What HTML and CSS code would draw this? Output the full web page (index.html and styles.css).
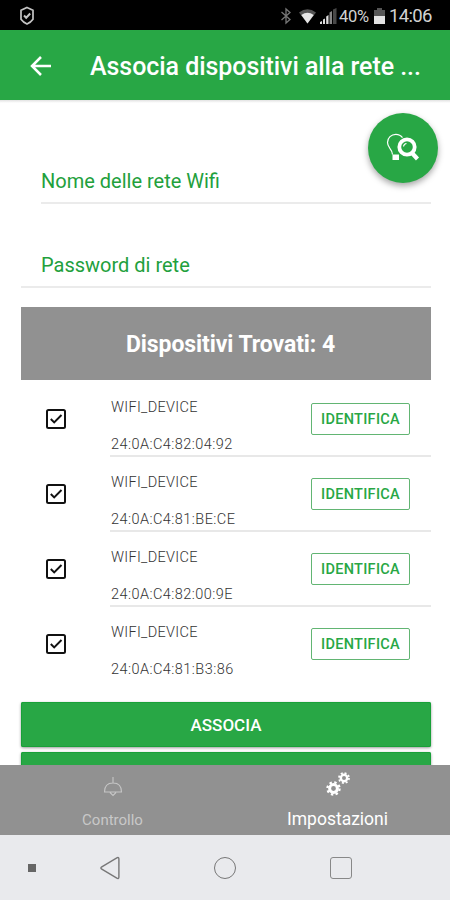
FILE: index.html
```html
<!DOCTYPE html>
<html lang="it">
<head>
<meta charset="utf-8">
<title>Associa dispositivi</title>
<link rel="stylesheet" href="styles.css">
</head>
<body>
<div class="phone">
  <div class="status">
    <svg class="shield" width="16" height="20" viewBox="0 0 16 20" fill="none" stroke="#c4c4c4" stroke-width="1.7"><path d="M8 1.5 L14 4.3 V13.3 Q12 16.2 8 18 Q4 16.2 2 13.3 V4.3 Z"/><path d="M5 9.5 L7.2 11.7 L11.2 7.5" stroke-width="2"/></svg>
    <svg class="bt" width="12" height="18" viewBox="0 0 12 18" fill="none" stroke="#777" stroke-width="1.3"><path d="M1.5 5 L10 12.5 L6 16 V2 L10 5.500 L1.500 13"/></svg>
    <svg class="wifi" width="17" height="15" viewBox="0 0 17 15"><path d="M0 3.500 Q8.500 -3 17 3.500 L8.500 14.500 Z" fill="#555"/><path d="M2.300 6 Q8.500 1.500 14.700 6 L8.500 14.500 Z" fill="#e6e6e6"/></svg>
    <svg class="signal" width="17" height="16" viewBox="0 0 17 16"><path d="M13 1.500 L16.500 0 V16 H13 Z" fill="#484848"/><path d="M9.500 4.500 L12 3 V16 H9.500 Z" fill="#888"/><path d="M0 14 L2 13 V16 H0 Z M3 11.500 L5 10.500 V16 H3 Z M6.200 8.500 L8.500 7 V16 H6.200 Z" fill="#ddd"/></svg>
    <span class="pct">40%</span>
    <svg class="batt" width="11" height="16" viewBox="0 0 11 16"><path d="M3 0 H8 V2 H11 V8 H0 V2 H3 Z" fill="#555"/><path d="M0 8 H11 V16 H0 Z" fill="#e2e2e2"/></svg>
    <span class="time">14:06</span>
  </div>
  <header class="appbar">
    <svg width="22" height="20" viewBox="0 0 22 20" fill="none" stroke="#fff" stroke-width="2.500"><path d="M11 1 L2 10 L11 19 M2 10 H21"/></svg>
    <h1>Associa dispositivi alla rete ...</h1>
  </header>
  <main>
    <button class="fab" aria-label="Cerca">
      <svg width="34" height="30" viewBox="0 0 34 30" fill="none" stroke="#fff"><path d="M6.500 21.500 C6.300 15.500 1.500 15 1.500 9.500 C1.500 4.800 5.300 1.300 9.800 1.300 C12.800 1.300 15 2.500 16.500 4.600" stroke-width="1.200"/><path d="M6.500 21.500 H13 V27 H6.500 Z" fill="#fff" stroke="none"/><circle cx="21" cy="14" r="7.700" stroke-width="3.800"/><path d="M26 20 L31.500 26" stroke-width="4.200"/><path d="M17.500 13.500 Q18 10.800 20.500 10.500" stroke-width="1.200"/></svg>
    </button>
    <div class="field ssid"><label>Nome delle rete Wifi</label></div>
    <div class="field pass"><label>Password di rete</label></div>
    <h2>Dispositivi Trovati: 4</h2>
    <ul>
      <li><svg class="check" width="20" height="20" viewBox="0 0 20 20" fill="none" stroke="#111" stroke-width="2"><rect x="1" y="1" width="18" height="18" rx="1.500"/><path d="M4.800 10 L8.200 13.400 L15.500 6"/></svg><div class="info"><div class="names"><span>WIFI_DEVICE</span><span class="mac">24:0A:C4:82:04:92</span></div><button class="ident">IDENTIFICA</button></div></li>
      <li><svg class="check" width="20" height="20" viewBox="0 0 20 20" fill="none" stroke="#111" stroke-width="2"><rect x="1" y="1" width="18" height="18" rx="1.500"/><path d="M4.800 10 L8.200 13.400 L15.500 6"/></svg><div class="info"><div class="names"><span>WIFI_DEVICE</span><span class="mac">24:0A:C4:81:BE:CE</span></div><button class="ident">IDENTIFICA</button></div></li>
      <li><svg class="check" width="20" height="20" viewBox="0 0 20 20" fill="none" stroke="#111" stroke-width="2"><rect x="1" y="1" width="18" height="18" rx="1.500"/><path d="M4.800 10 L8.200 13.400 L15.500 6"/></svg><div class="info"><div class="names"><span>WIFI_DEVICE</span><span class="mac">24:0A:C4:82:00:9E</span></div><button class="ident">IDENTIFICA</button></div></li>
      <li><svg class="check" width="20" height="20" viewBox="0 0 20 20" fill="none" stroke="#111" stroke-width="2"><rect x="1" y="1" width="18" height="18" rx="1.500"/><path d="M4.800 10 L8.200 13.400 L15.500 6"/></svg><div class="info"><div class="names"><span>WIFI_DEVICE</span><span class="mac">24:0A:C4:81:B3:86</span></div><button class="ident">IDENTIFICA</button></div></li>
    </ul>
    <button class="action">ASSOCIA</button>
    <div class="action"></div>
  </main>
  <nav class="tabs">
    <div class="tab"><svg width="20" height="20" viewBox="0 0 20 20" fill="none" stroke="#c6c6c6" stroke-width="1.100"><path d="M10 0 V6 M1.500 15 C1.500 9 5 6 10 6 C15 6 18.500 9 18.500 15 Z M7 15.500 L10 18.500 L13 15.500"/></svg><span>Controllo</span></div>
    <div class="tab active"><svg width="24" height="24" viewBox="0 0 24 24" fill="none" stroke="#fff"><circle cx="7.500" cy="16.500" r="3.900" stroke-width="3"/><circle cx="7.500" cy="16.500" r="6.100" stroke-width="2.200" stroke-dasharray="2.400 2.391"/><circle cx="18" cy="6" r="3.200" stroke-width="2.400"/><circle cx="18" cy="6" r="5" stroke-width="1.800" stroke-dasharray="2 1.927"/></svg><span>Impostazioni</span></div>
  </nav>
  <div class="sysnav">
    <i class="dot"></i>
    <svg class="back" width="20" height="24" viewBox="0 0 20 24" fill="none" stroke="#777" stroke-width="1.400"><path d="M1.800 10.900 L16.800 1.800 Q18.900 1 18.900 3 V21 Q18.900 23 16.800 22.200 L1.800 13.100 Q0 12 1.800 10.900 Z"/></svg>
    <i class="home"></i>
    <i class="recent"></i>
  </div>
</div>
</body>
</html>
```
FILE: styles.css
```css
* { box-sizing: border-box; margin: 0; padding: 0; }
body { font-family: Roboto, sans-serif; background: #fff; }
button { font-family: inherit; border: 0; }
svg { display: block; flex: none; }
.phone { width: 450px; height: 900px; overflow: hidden; display: flex; flex-direction: column; }
.status { height: 30px; flex: none; background: #000; color: #d2d2d2; display: flex; align-items: center; padding: 2px 0 0 19px; white-space: nowrap; }
.bt { margin-left: 245px; }
.wifi { margin-left: 7px; }
.signal { margin-left: 4px; }
.pct { width: 31px; margin-left: 2px; font-size: 16.500px; letter-spacing: -0.300px; }
.batt { margin-left: 4px; }
.time { margin-left: 4px; font-size: 18.500px; letter-spacing: -0.650px; }
.appbar { height: 70px; flex: none; background: #28a745; color: #fff; display: flex; align-items: center; padding: 2px 0 0 30px; }
.appbar h1 { margin-left: 38px; font-size: 25px; font-weight: 500; letter-spacing: -0.060px; white-space: nowrap; }
main { height: 665px; flex: none; padding: 0 19px 0 21px; overflow: hidden; position: relative; background: linear-gradient(#e2e2e2, #fff 3px); }
.fab { position: absolute; left: 368px; top: 13px; width: 70px; height: 70px; border-radius: 50%; background: #28a745; box-shadow: 0 3px 6px rgba(0,0,0,.35); display: flex; align-items: center; justify-content: center; }
.field { display: flex; align-items: flex-end; color: #22a03c; font-size: 20px; line-height: 24px; border-bottom: 2px solid #ebebeb; }
.ssid { height: 104px; margin-left: 20px; padding-bottom: 9px; }
.pass { height: 84px; padding: 0 0 9px 20px; }
h2 { height: 73px; margin: 19px 0 1px; padding: 2px 0 0 9px; width: 410px; background: #919191; color: #fff; font-size: 23px; font-weight: 700; letter-spacing: -0.080px; display: flex; align-items: center; justify-content: center; }
ul { list-style: none; margin-bottom: 21px; }
li { height: 75px; display: flex; align-items: center; padding-left: 25px; }
.info { flex: 1; height: 75px; margin: 2px 0 0 44px; border-bottom: 2px solid #e8e8e8; display: flex; align-items: flex-start; justify-content: space-between; padding: 17px 21px 0 1px; }
li:last-child .info { border: 0; }
.names { display: flex; flex-direction: column; gap: 19px; color: #333; font-size: 14.500px; font-weight: 300; line-height: 18px; letter-spacing: .300px; }
.mac { letter-spacing: .450px; }
.ident { margin-top: 4px; width: 99px; height: 32px; border: 1px solid #62b573; border-radius: 2px; background: #fff; color: #28a745; font-size: 14.500px; font-weight: 500; letter-spacing: .3px; }
.action { display: block; width: 410px; height: 45px; margin-bottom: 5px; background: #28a745; border-radius: 2px; color: #fff; font-size: 17px; font-weight: 500; box-shadow: 0 1px 3px rgba(0,0,0,.4), inset 0 0 0 1px #18a038; }
.tabs { height: 70px; flex: none; background: #919191; display: grid; grid-template-columns: 1fr 1fr; }
.tab { display: flex; flex-direction: column; align-items: center; padding-top: 12px; color: #c8c8c8; font-size: 15px; }
.tab span { margin-top: 13px; line-height: 20px; }
.tab.active { color: #fff; font-size: 17.500px; padding-top: 7px; }
.tab.active span { margin-top: 13px; }
.sysnav { flex: 1; background: #e9eaed; display: flex; align-items: center; padding-left: 28px; }
.dot { width: 8px; height: 8px; background: #666; }
.back { margin-left: 64px; }
.home { width: 22px; height: 22px; margin-left: 94px; border: 1.500px solid #777; border-radius: 50%; }
.recent { width: 22px; height: 22px; margin-left: 94px; border: 1.500px solid #888; border-radius: 3px; }
```
